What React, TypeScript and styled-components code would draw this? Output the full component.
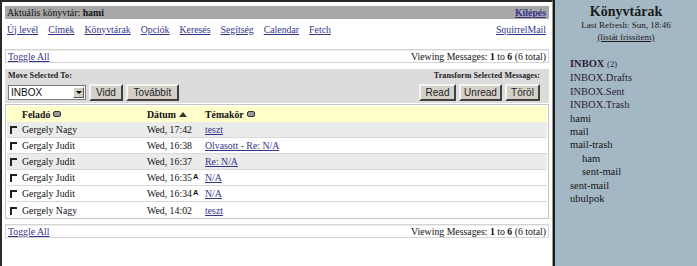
import styled, { createGlobalStyle } from 'styled-components'

const GlobalStyle = createGlobalStyle`
    *, *::before, *::after {
        box-sizing: border-box;
    }
    html, body {
        margin: 0;
        padding: 0;
        background: #fff;
    }
    body {
        font-family: 'Liberation Serif', 'Times New Roman', serif;
        font-size: 9.8px;
        color: #111;
    }
`

const Page = styled.div`
    display: flex;
    width: 697px;
    height: 266px;
    overflow: hidden;
`

const MainFrame = styled.div`
    width: 553px;
    flex-shrink: 0;
    border-top: 2px solid #2a2a2a;
    border-left: 2px solid #2a2a2a;
    border-right: 1px solid #9a9a9a;
    background: #fff;
    padding: 4px 3px 0 3px;
    display: flex;
    flex-direction: column;
`

const Divider = styled.div`
    width: 2px;
    flex-shrink: 0;
    background: #1c1c1c;
`

const Link = styled.a<{ $bold?: boolean }>`
    color: #33338a;
    text-decoration: underline;
    font-weight: ${({ $bold }) => ($bold ? 'bold' : 'normal')};
    cursor: pointer;
`

const TitleBar = styled.div`
    height: 13px;
    background: #a8a8a8;
    display: flex;
    align-items: center;
    justify-content: space-between;
    padding: 0 3px 0 2px;
`

const NavRow = styled.div`
    height: 14px;
    margin-top: 3px;
    display: flex;
    align-items: center;
    justify-content: space-between;
    padding: 0 3px 0 2px;
`

const NavLinks = styled.div`
    display: flex;
    gap: 10px;
`

const InfoBar = styled.div<{ $top: number }>`
    margin-top: ${({ $top }) => $top}px;
    height: 14px;
    border: 1px solid #d4d4d4;
    box-shadow: inset 0 1px 0 #ececec;
    display: flex;
    align-items: center;
    justify-content: space-between;
    padding: 0 2px 0 2px;
`

const ControlsBox = styled.div`
    margin-top: 6px;
    height: 34px;
    background: #dcdcdc;
    display: flex;
    justify-content: space-between;
    padding: 2px 9px 0 3px;
`

const ControlGroup = styled.div<{ $right?: boolean }>`
    display: flex;
    flex-direction: column;
    align-items: ${({ $right }) => ($right ? 'flex-end' : 'flex-start')};
    gap: 3px;
`

const SmallLabel = styled.div`
    font-size: 8px;
    font-weight: bold;
    letter-spacing: 0.1px;
    color: #222;
    line-height: 10px;
`

const ButtonRow = styled.div`
    display: flex;
    gap: 3px;
    align-items: center;
`

const Select = styled.div`
    width: 78px;
    height: 15px;
    background: #fff;
    border: 1px solid #7a7a7a;
    display: flex;
    align-items: center;
    justify-content: space-between;
    font-family: 'Liberation Sans', Arial, sans-serif;
    font-size: 10px;
    padding-left: 2px;
`

const SelectArrow = styled.span`
    width: 11px;
    height: 11px;
    margin-right: 1px;
    background: #d4d0c8;
    border: 1px solid;
    border-color: #fff #555 #555 #fff;
    display: flex;
    align-items: center;
    justify-content: center;
    &::after {
        content: '';
        border-left: 3px solid transparent;
        border-right: 3px solid transparent;
        border-top: 3px solid #000;
    }
`

const Button = styled.button<{ $w: number }>`
    width: ${({ $w }) => $w}px;
    height: 17px;
    padding: 0;
    background: #d4d0c8;
    border: 2px solid;
    border-color: #f4f4f4 #404040 #404040 #f4f4f4;
    font-family: 'Liberation Sans', Arial, sans-serif;
    font-size: 10px;
    color: #222;
`

const MessageTable = styled.div`
    margin-top: 1px;
    border: 1px solid #c4c4c4;
    padding: 1px 1px 0 1px;
`

const Grid = styled.div<{ $bg: string; $line?: boolean }>`
    display: grid;
    grid-template-columns: 12px 125px 58px 1fr;
    align-items: center;
    height: 16px;
    padding-left: 3px;
    background: ${({ $bg }) => $bg};
    border-bottom: ${({ $line }) => ($line ? '1px solid #d8d8d8' : 'none')};
`

const HeadCell = styled.div`
    font-weight: bold;
    display: flex;
    align-items: center;
    gap: 3px;
`

const SortBox = styled.span`
    width: 8px;
    height: 6px;
    background: #9a9a9a;
    border: 1px solid #333;
    border-radius: 2px;
`

const SortUp = styled.span`
    border-left: 4px solid transparent;
    border-right: 4px solid transparent;
    border-bottom: 5px solid #333;
`

const CheckBox = styled.span`
    width: 7px;
    height: 8px;
    border-top: 2px solid #222;
    border-left: 2px solid #222;
    margin-top: 1px;
`

const DateCell = styled.div`
    display: flex;
    align-items: flex-start;
    white-space: nowrap;
`

const Flag = styled.span`
    font-family: 'Liberation Sans', Arial, sans-serif;
    font-weight: bold;
    font-size: 7.5px;
    margin-left: 1px;
    line-height: 9px;
`

const Sidebar = styled.div`
    flex: 1;
    background: #a3b8c4;
    padding-top: 4px;
    color: #1a1a1a;
`

const SideTitle = styled.div`
    text-align: center;
    font-size: 14px;
    font-weight: bold;
    line-height: 15px;
`

const SideSmall = styled.div`
    text-align: center;
    font-size: 9px;
    line-height: 12px;
`

const FolderList = styled.div`
    margin-top: 14px;
    padding-left: 15px;
    display: flex;
    flex-direction: column;
`

const Folder = styled.div<{ $indent?: boolean; $inbox?: boolean; $bold?: boolean }>`
    font-size: 10.5px;
    line-height: 13.4px;
    padding-left: ${({ $indent }) => ($indent ? '12px' : '0')};
    color: ${({ $inbox }) => ($inbox ? '#2e1c38' : '#161616')};
    font-weight: ${({ $bold }) => ($bold ? 'bold' : 'normal')};
`

const Count = styled.span`
    font-size: 8.5px;
    font-weight: normal;
`

const RefreshLink = styled(Link)`
    color: #1a1a1a;
`

const navItems = ['Új levél', 'Címek', 'Könyvtárak', 'Opciók', 'Keresés', 'Segítség', 'Calendar', 'Fetch']

const messages = [
    { from: 'Gergely Nagy', date: 'Wed, 17:42', subject: 'teszt', bg: '#ebebeb' },
    { from: 'Gergaly Judit', date: 'Wed, 16:38', subject: 'Olvasott - Re: N/A', bg: '#fff' },
    { from: 'Gergaly Judit', date: 'Wed, 16:37', subject: 'Re: N/A', bg: '#ebebeb' },
    { from: 'Gergaly Judit', date: 'Wed, 16:35', subject: 'N/A', bg: '#fff', answered: true },
    { from: 'Gergaly Judit', date: 'Wed, 16:34', subject: 'N/A', bg: '#fff', answered: true },
    { from: 'Gergely Nagy', date: 'Wed, 14:02', subject: 'teszt', bg: '#fff' }
]

const folders = [
    { name: 'INBOX.Drafts', inbox: true },
    { name: 'INBOX.Sent', inbox: true },
    { name: 'INBOX.Trash', inbox: true },
    { name: 'hami' },
    { name: 'mail' },
    { name: 'mail-trash' },
    { name: 'ham', indent: true },
    { name: 'sent-mail', indent: true },
    { name: 'sent-mail' },
    { name: 'ubulpok' }
]

const Viewing = () => (
    <span>
        Viewing Messages: <b>1</b> to <b>6</b> (6 total)
    </span>
)

export default function App() {
    return (
        <>
            <GlobalStyle />
            <Page>
                <MainFrame>
                    <TitleBar>
                        <span>
                            Aktuális könyvtár: <b>hami</b>
                        </span>
                        <Link $bold>Kilépés</Link>
                    </TitleBar>
                    <NavRow>
                        <NavLinks>
                            {navItems.map((item) => (
                                <Link key={item}>{item}</Link>
                            ))}
                        </NavLinks>
                        <Link>SquirrelMail</Link>
                    </NavRow>

                    <InfoBar $top={13}>
                        <Link>Toggle All</Link>
                        <Viewing />
                    </InfoBar>

                    <ControlsBox>
                        <ControlGroup>
                            <SmallLabel>Move Selected To:</SmallLabel>
                            <ButtonRow>
                                <Select>
                                    INBOX
                                    <SelectArrow />
                                </Select>
                                <Button $w={34}>Vidd</Button>
                                <Button $w={53}>Továbbít</Button>
                            </ButtonRow>
                        </ControlGroup>
                        <ControlGroup $right>
                            <SmallLabel>Transform Selected Messages:</SmallLabel>
                            <ButtonRow>
                                <Button $w={37}>Read</Button>
                                <Button $w={43}>Unread</Button>
                                <Button $w={35}>Töröl</Button>
                            </ButtonRow>
                        </ControlGroup>
                    </ControlsBox>

                    <MessageTable>
                        <Grid $bg="#ffffcc">
                            <span />
                            <HeadCell>
                                Feladó <SortBox />
                            </HeadCell>
                            <HeadCell>
                                Dátum <SortUp />
                            </HeadCell>
                            <HeadCell>
                                Témakör <SortBox />
                            </HeadCell>
                        </Grid>
                        {messages.map((m, i) => (
                            <Grid key={i} $bg={m.bg} $line={i < messages.length - 1}>
                                <CheckBox />
                                <span>{m.from}</span>
                                <DateCell>
                                    {m.date}
                                    {m.answered && <Flag>A</Flag>}
                                </DateCell>
                                <span>
                                    <Link>{m.subject}</Link>
                                </span>
                            </Grid>
                        ))}
                    </MessageTable>

                    <InfoBar $top={5}>
                        <Link>Toggle All</Link>
                        <Viewing />
                    </InfoBar>
                </MainFrame>
                <Divider />
                <Sidebar>
                    <SideTitle>Könyvtárak</SideTitle>
                    <SideSmall>Last Refresh: Sun, 18:46</SideSmall>
                    <SideSmall>
                        <RefreshLink>(listát frissítem)</RefreshLink>
                    </SideSmall>
                    <FolderList>
                        <Folder $inbox $bold>
                            INBOX <Count>(2)</Count>
                        </Folder>
                        {folders.map((f, i) => (
                            <Folder key={i} $inbox={f.inbox} $indent={f.indent}>
                                {f.name}
                            </Folder>
                        ))}
                    </FolderList>
                </Sidebar>
            </Page>
        </>
    )
}
